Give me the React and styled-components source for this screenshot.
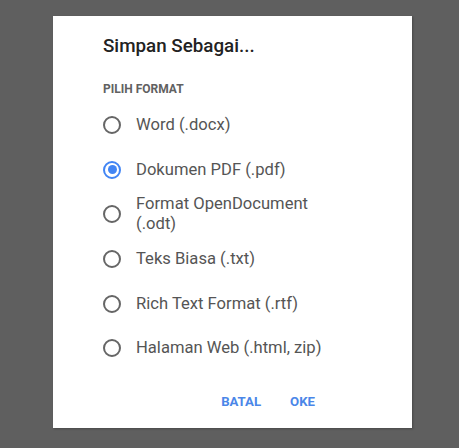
import React from "react";
import styled, { createGlobalStyle } from "styled-components";

const GlobalStyle = createGlobalStyle`
  html, body {
    margin: 0;
    padding: 0;
    background: #5f5f5f;
  }
  body {
    font-family: Roboto, "Noto Sans", "Liberation Sans", sans-serif;
  }
`;

const Page = styled.div`
  width: 459px;
  height: 448px;
  padding: 16px 0 0 53px;
  box-sizing: border-box;
  background: #5f5f5f;
`;

const Dialog = styled.div`
  width: 359px;
  height: 412px;
  box-sizing: border-box;
  background: #ffffff;
  padding: 18px 0 0 50px;
  display: flex;
  flex-direction: column;
  box-shadow: 1px 1px 2px rgba(0, 0, 0, 0.25);
`;

const Title = styled.h2`
  margin: 0;
  font-size: 18.8px;
  line-height: 24px;
  font-weight: 500;
  color: #222222;
`;

const Caption = styled.div`
  margin-top: 23px;
  font-size: 12px;
  line-height: 16px;
  font-weight: 700;
  color: #616161;
`;

const Options = styled.div`
  margin-top: 6px;
  display: flex;
  flex-direction: column;
`;

const Option = styled.label`
  height: 44.6px;
  display: flex;
  align-items: center;
  gap: 15px;
  cursor: pointer;
`;

const Radio = styled.span`
  width: 18px;
  height: 18px;
  box-sizing: border-box;
  border-radius: 50%;
  border: 2px solid ${props => (props.checked ? "#4285f4" : "#666666")};
  display: flex;
  align-items: center;
  justify-content: center;
  flex-shrink: 0;
  &::after {
    content: "";
    width: 9px;
    height: 9px;
    border-radius: 50%;
    background: ${props => (props.checked ? "#4285f4" : "transparent")};
  }
`;

const Label = styled.span`
  max-width: 200px;
  font-size: 16.6px;
  line-height: 20px;
  color: #555555;
`;

const Actions = styled.div`
  margin-top: auto;
  margin-bottom: 16px;
  padding-right: 97px;
  display: flex;
  justify-content: flex-end;
  gap: 29px;
`;

const Action = styled.button`
  border: none;
  background: none;
  padding: 0;
  font-family: inherit;
  font-size: 13.2px;
  line-height: 20px;
  font-weight: 700;
  color: #4a86e8;
  cursor: pointer;
`;

const formats = [
  "Word (.docx)",
  "Dokumen PDF (.pdf)",
  "Format OpenDocument (.odt)",
  "Teks Biasa (.txt)",
  "Rich Text Format (.rtf)",
  "Halaman Web (.html, zip)",
];

const App = () => {
  const [selected, setSelected] = React.useState(1);
  return (
    <Page>
      <GlobalStyle />
      <Dialog>
        <Title>Simpan Sebagai...</Title>
        <Caption>PILIH FORMAT</Caption>
        <Options>
          {formats.map((f, i) => (
            <Option key={f} onClick={() => setSelected(i)}>
              <Radio checked={selected === i} />
              <Label>{f}</Label>
            </Option>
          ))}
        </Options>
        <Actions>
          <Action>BATAL</Action>
          <Action>OKE</Action>
        </Actions>
      </Dialog>
    </Page>
  );
};

export default App;
